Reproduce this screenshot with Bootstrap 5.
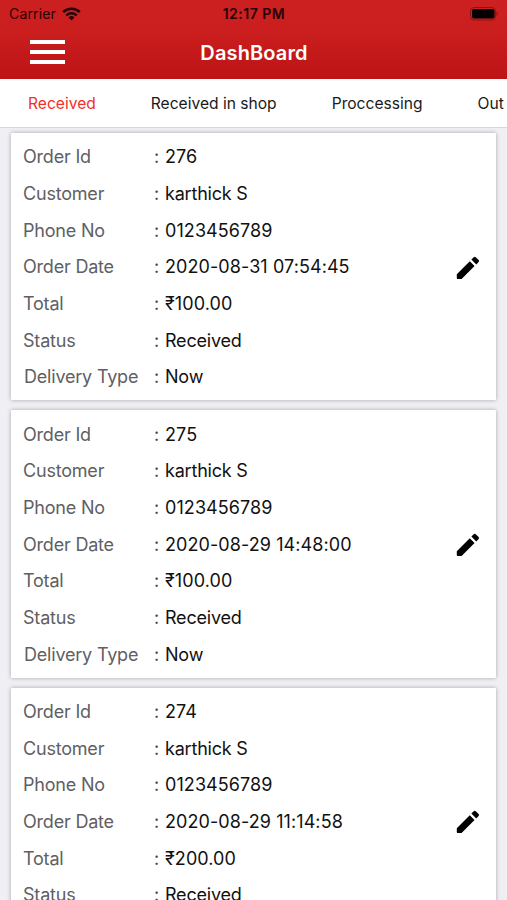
<!DOCTYPE html>
<html lang="en">
<head>
<meta charset="utf-8">
<meta name="viewport" content="width=device-width, initial-scale=1">
<title>DashBoard</title>
<link href="https://cdn.jsdelivr.net/npm/bootstrap@5.3.0/dist/css/bootstrap.min.css" rel="stylesheet">
<style>
body{font-family:Inter,"Liberation Sans",sans-serif;background:#efeff4;color:#111;height:900px}
.app-head{height:79px;background:linear-gradient(#cd2021,#cb1e1f 35%,#bd1415)}
.status-bar{height:27px;font-size:14px;color:#260304;padding:0 8px 0 9px}
.status-bar>*{flex:1 1 0}
.status-bar .carrier{letter-spacing:.15px}
.status-time{font-weight:600;letter-spacing:.5px}
.wifi{margin-left:6px}
.title-bar{height:52px;padding-left:30px}
.title-bar h1{font-size:20px;font-weight:600;letter-spacing:.12px;padding-bottom:1px}
.menu-btn{width:35px;height:24px;margin-top:-2px}
.side{width:35px;margin-right:29px}
.tabs-row{height:49px;font-size:15.6px;border-bottom:1px solid #d8d8dc;padding:1px 0 0 28px;gap:55px}
.tabs-row .nav-link{color:#1a1a1a}
.tabs-row .nav-link.active{color:#f0302c}
.orders{padding:5px 11px 0;gap:9.8px}
.order{border-radius:1px;box-shadow:0 0 4px rgba(0,0,0,.3);padding:6.4px 14px 4.5px 12px}
.line{height:36.66px;font-size:18px;line-height:36.66px;letter-spacing:-.2px}
.line dt{width:131px;font-weight:400;color:#606063}
.line .last{padding-left:1px}
.line .sep{width:11px;color:#444}
.line .digits{letter-spacing:.08px}
.edit{width:28px;height:28px}
</style>
<script src="https://cdn.jsdelivr.net/npm/bootstrap@5.3.0/dist/js/bootstrap.bundle.min.js"></script>
</head>
<body class="overflow-hidden">
<header class="app-head">
  <div class="status-bar d-flex align-items-center">
    <span class="d-flex align-items-center"><span class="carrier">Carrier</span>
      <svg class="wifi" width="19" height="14" viewBox="0 0 19 14" fill="none" stroke="currentColor" stroke-width="2.5"><path d="M1.2 5.1a11.8 11.8 0 0 1 16.6 0M4.3 8.3a7.4 7.4 0 0 1 10.4 0"/><path d="M6.5 10.4a4.3 4.3 0 0 1 6 0l-3 3z" fill="currentColor" stroke="none"/></svg></span>
    <span class="status-time text-center">12:17 PM</span>
    <span class="d-flex justify-content-end"><svg width="29" height="14" viewBox="0 0 29 14"><rect x=".5" y=".5" width="25" height="12.5" rx="3.5" fill="none" stroke="#8e1213"/><rect x="2" y="2" width="22.5" height="9.5" rx="2" fill="#050000"/><path d="M26.7 4.5q2 2.2 0 4.5z" fill="#6b0e0e"/></svg></span>
  </div>
  <div class="title-bar d-flex align-items-center justify-content-between text-white">
    <svg class="menu-btn" viewBox="0 0 35 24" fill="#fff"><path d="M0 0h35v4H0zM0 10h35v4H0zM0 20h35v4H0z"/></svg>
    <h1 class="m-0">DashBoard</h1>
    <span class="side"></span>
  </div>
</header>
<nav class="tabs-row nav flex-nowrap text-nowrap align-items-center bg-white overflow-hidden">
  <a class="nav-link p-0 active" href="#">Received</a>
  <a class="nav-link p-0" href="#">Received in shop</a>
  <a class="nav-link p-0" href="#">Proccessing</a>
  <a class="nav-link p-0" href="#">Out</a>
</nav>
<main class="orders d-flex flex-column" id="orders"></main>
<template id="order">
  <article class="order bg-white d-flex align-items-center">
    <dl class="m-0 flex-grow-1"></dl>
    <svg class="edit" viewBox="0 0 24 24"><path d="M2.4 17.3V20.6q0 .8.8.8H6.5L17.6 10.3l-4.1-4.1zM21.1 6.9a1.2 1.2 0 0 0 0-1.7l-2.5-2.5a1.2 1.2 0 0 0-1.7 0l-2 2 4.2 4.2z"/></svg>
  </article>
</template>
<script>
const labels=["Order Id","Customer","Phone No","Order Date","Total","Status","Delivery Type"];
[["276","karthick S","0123456789","2020-08-31 07:54:45","₹100.00","Received","Now"],
 ["275","karthick S","0123456789","2020-08-29 14:48:00","₹100.00","Received","Now"],
 ["274","karthick S","0123456789","2020-08-29 11:14:58","₹200.00","Received","Now"]].forEach(o=>{
  const n=document.getElementById("order").content.cloneNode(true);
  n.querySelector("dl").innerHTML=o.map((v,i)=>`<div class="line d-flex"><dt class="${i==6?"last":""}">${labels[i]}</dt><span class="sep">:</span><dd class="m-0 ${/\d/.test(v)?"digits":""}">${v}</dd></div>`).join("");
  document.getElementById("orders").append(n);
});
</script>
</body>
</html>
